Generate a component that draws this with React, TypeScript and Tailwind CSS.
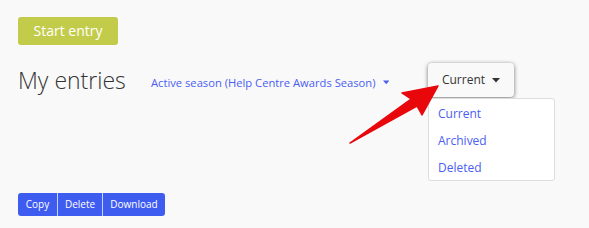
import React from 'react';

const Caret: React.FC<{ className?: string }> = ({ className }) => (
  <svg width="8" height="5" viewBox="0 0 8 5" className={className}>
    <path d="M0 0h8L4 4.5z" fill="currentColor" />
  </svg>
);

const App: React.FC = () => {
  return (
    <div
      className="relative w-[589px] h-[228px] bg-[#f9f9f9] overflow-hidden pl-[18px] pt-[17px]"
      style={{ fontFamily: '"Open Sans", "Liberation Sans", sans-serif' }}
    >
      <button className="w-[100px] h-[28px] rounded-[3px] bg-[#c3cc4a] text-white text-[14px] leading-none">
        Start entry
      </button>

      <div className="flex items-center h-[34px] mt-[18px]">
        <h1 className="shrink-0 whitespace-nowrap text-[23px] font-light text-[#333] leading-none w-[133px]">
          My entries
        </h1>
        <a className="shrink-0 w-[238px] mt-[6px] flex items-center gap-[7px] whitespace-nowrap text-[11.2px] text-[#4a5ef2]">
          Active season (Help Centre Awards Season)
          <Caret />
        </a>
        <div className="relative shrink-0 ml-[39px]">
          <button className="w-[86px] h-[34px] rounded-[4px] bg-[#f9f9f9] text-[#333] text-[12px] flex items-center justify-center gap-[7px] shadow-[0_1px_4px_rgba(0,0,0,0.55)]">
            Current
            <Caret />
          </button>
          <div className="absolute left-0 top-[35px] w-[127px] h-[83px] bg-white border border-[#ddd] rounded-[3px] flex flex-col pt-[6px] pl-[9px] gap-[9px] text-[12px] text-[#4a5ef2]">
            <span className="leading-[18px]">Current</span>
            <span className="leading-[18px]">Archived</span>
            <span className="leading-[18px]">Deleted</span>
          </div>
        </div>
      </div>

      <div className="mt-[96px] flex w-[147px] h-[23px] rounded-[3px] bg-[#3f5cf0] text-white text-[10px] overflow-hidden">
        <span className="w-[40px] flex items-center justify-center border-r border-[#c9d1ff]">Copy</span>
        <span className="w-[45px] flex items-center justify-center border-r border-[#c9d1ff]">Delete</span>
        <span className="flex-1 flex items-center justify-center">Download</span>
      </div>

      <svg className="absolute left-0 top-0 pointer-events-none" width="589" height="228">
        <polygon
          points="438,86 402,93 411,99 350,143 417,106 422,115"
          fill="#e8080c"
          stroke="#e8080c"
          strokeWidth="1.5"
          strokeLinejoin="round"
        />
      </svg>
    </div>
  );
};

export default App;
